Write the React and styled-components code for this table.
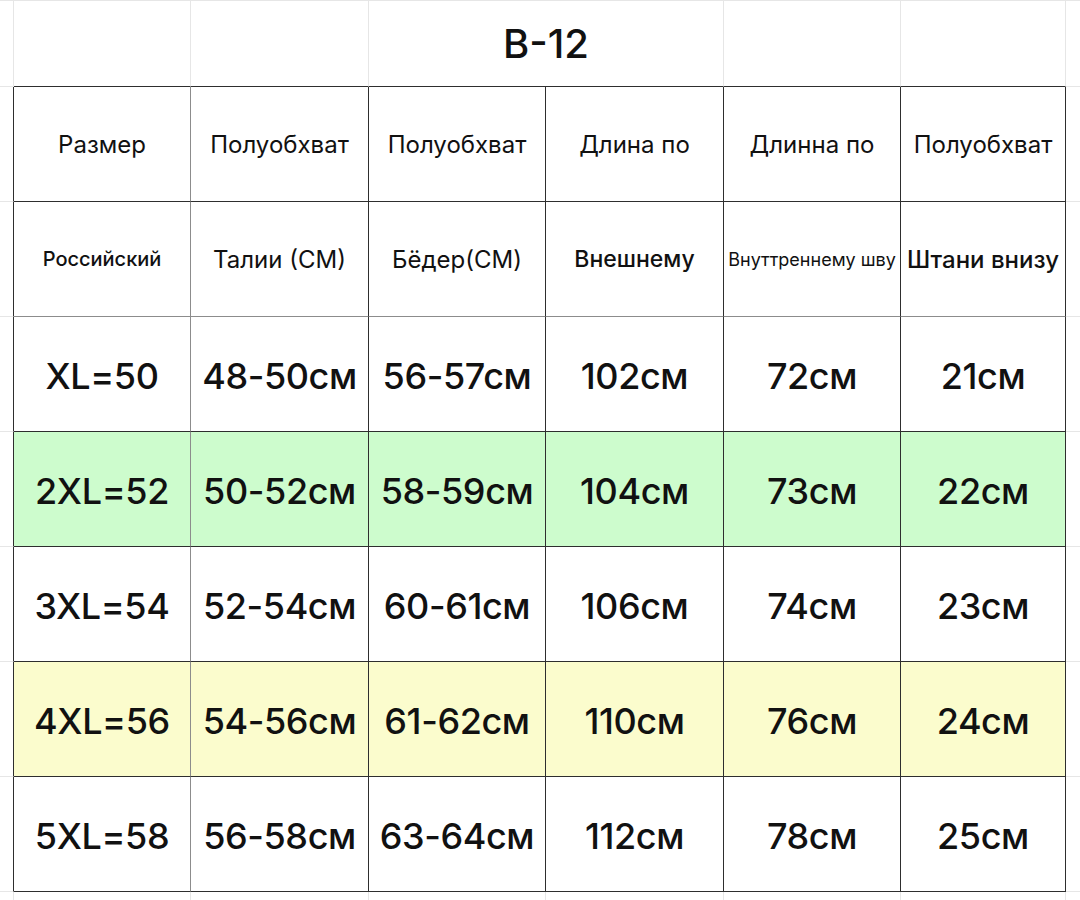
import React from "react";
import styled, { createGlobalStyle } from "styled-components";

const GlobalStyle = createGlobalStyle`
  html, body {
    margin: 0;
    padding: 0;
    background: #ffffff;
  }
  body {
    font-family: Inter, "Noto Sans", "Liberation Sans", sans-serif;
    color: #111;
  }
`;

const FAINT = "#e6e6e6";
const DARK = "#2e2e2e";
const GREY = "#8c8c8c";

const header1 = ["Размер", "Полуобхват", "Полуобхват", "Длина по", "Длинна по", "Полуобхват"];

const header2 = [
  { text: "Российский", size: 20, weight: 500 },
  { text: "Талии (СМ)", size: 24, weight: 400 },
  { text: "Бёдер(СМ)", size: 24, weight: 400 },
  { text: "Внешнему", size: 23, weight: 500 },
  { text: "Внуттреннему шву", size: 18, weight: 400 },
  { text: "Штани внизу", size: 24, weight: 500 },
];

const sizes = [
  { bg: "#ffffff", cells: ["XL=50", "48-50см", "56-57см", "102см", "72см", "21см"] },
  { bg: "#cdfccd", cells: ["2XL=52", "50-52см", "58-59см", "104см", "73см", "22см"] },
  { bg: "#ffffff", cells: ["3XL=54", "52-54см", "60-61см", "106см", "74см", "23см"] },
  { bg: "#fbfccd", cells: ["4XL=56", "54-56см", "61-62см", "110см", "76см", "24см"] },
  { bg: "#ffffff", cells: ["5XL=58", "56-58см", "63-64см", "112см", "78см", "25см"] },
];

export default function App() {
  // column 0 gets a grey divider, the rest are dark
  const colLine = (i) => (i === 0 ? GREY : DARK);

  return (
    <>
      <GlobalStyle />
      <Sheet>
        {/* top spreadsheet row with the title */}
        <Cell $top={FAINT} $right={FAINT} $bottom={FAINT} />
        <Cell $top={FAINT} $right={FAINT} $bottom={DARK} />
        <Cell $top={FAINT} $right={FAINT} $bottom={DARK} />
        <Title $top={FAINT} $right={FAINT} $bottom={DARK}>B-12</Title>
        <Cell $top={FAINT} $right={FAINT} $bottom={DARK} />
        <Cell $top={FAINT} $right={FAINT} $bottom={DARK} />
        <Cell $top={FAINT} $bottom={FAINT} />

        <Cell $right={DARK} $bottom={FAINT} />
        {header1.map((t, i) => (
          <Cell key={"h1" + i} $right={colLine(i)} $bottom={DARK} $size={24}>
            {t}
          </Cell>
        ))}
        <Cell $bottom={FAINT} />

        <Cell $right={DARK} $bottom={FAINT} />
        {header2.map((h, i) => (
          <Cell
            key={"h2" + i}
            $right={colLine(i)}
            $bottom={GREY}
            $size={h.size}
            $weight={h.weight}
          >
            {h.text}
          </Cell>
        ))}
        <Cell $bottom={FAINT} />

        {sizes.map((row, r) => (
          <React.Fragment key={"r" + r}>
            <Cell $right={DARK} $bottom={FAINT} />
            {row.cells.map((t, i) => (
              <Value key={i} $bg={row.bg} $right={colLine(i)} $bottom={DARK}>
                {t}
              </Value>
            ))}
            <Cell $bottom={FAINT} />
          </React.Fragment>
        ))}

        <Cell $right={FAINT} />
        {header1.map((_, i) => (
          <Cell key={"b" + i} $right={FAINT} />
        ))}
        <Cell />
      </Sheet>
    </>
  );
}

const Sheet = styled.div`
  display: grid;
  width: 1080px;
  height: 900px;
  overflow: hidden;
  grid-template-columns: 14px 177px 178px 177px 178px 177px 165px 1fr;
  grid-template-rows: 87px repeat(7, 115px) 1fr;
  background: #fff;
`;

const Cell = styled.div`
  box-sizing: border-box;
  display: flex;
  align-items: center;
  justify-content: center;
  text-align: center;
  white-space: nowrap;
  overflow: hidden;
  background: ${(p) => p.$bg || "transparent"};
  border-top: ${(p) => (p.$top ? `1px solid ${p.$top}` : "none")};
  border-right: ${(p) => (p.$right ? `1px solid ${p.$right}` : "none")};
  border-bottom: ${(p) => (p.$bottom ? `1px solid ${p.$bottom}` : "none")};
  font-size: ${(p) => p.$size || 20}px;
  font-weight: ${(p) => p.$weight || 400};
  color: #111;
`;

const Value = styled(Cell)`
  font-size: 36px;
  font-weight: 500;
  letter-spacing: -0.4px;
  padding-top: 3px;
`;

const Title = styled(Cell)`
  grid-column: span 2;
  font-size: 40px;
  font-weight: 500;
`;
